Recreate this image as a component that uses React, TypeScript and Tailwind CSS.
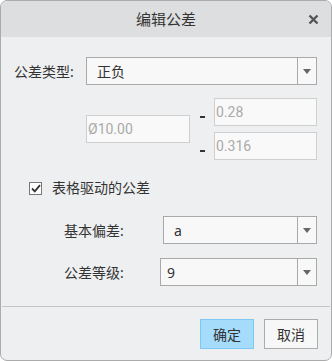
import React from "react";

const font = { fontFamily: '"Noto Sans", "Noto Sans CJK SC", sans-serif' };

function Arrow() {
  return (
    <svg width="8" height="5" viewBox="0 0 8 5">
      <path d="M0 0 L8 0 L4 5 Z" fill="#666" />
    </svg>
  );
}

function Select({ value, w, pl }: { value: string; w: string; pl: string }) {
  return (
    <div className={`flex h-[28px] ${w} border border-[#a9a9a9] bg-[#f8f8f8]`}>
      <div className={`flex flex-1 items-center ${pl} text-[14px] text-[#333]`}>{value}</div>
      <div className="flex w-[19px] items-center justify-center border-l border-[#a9a9a9]">
        <Arrow />
      </div>
    </div>
  );
}

function Input({ value, w }: { value: string; w: string }) {
  return (
    <div
      className={`flex h-[28px] ${w} items-center border border-[#cfcfcf] bg-[#f9f9f9] pl-[1px] text-[14px] text-[#aaaaaa]`}
      style={{ fontFamily: 'Roboto, "Noto Sans", sans-serif' }}
    >
      {value}
    </div>
  );
}

function Dash() {
  return (
    <div className="flex w-[24px] justify-center pt-[9px]">
      <div className="h-[2px] w-[5px] bg-[#333]" />
    </div>
  );
}

export default function App() {
  return (
    <div className="h-[361px] w-[332px] bg-white" style={font}>
      <div className="flex h-[361px] w-[332px] flex-col overflow-hidden rounded-[7px] border border-[#ababab] bg-[#eeeff1]">
        <div className="relative flex h-[36px] shrink-0 items-center justify-center bg-[#dcdedf] text-[15px] text-[#333]">
          编辑公差
          <div className="absolute right-[12px] top-[13px]">
            <svg width="11" height="11" viewBox="0 0 11 11">
              <path d="M1.5 1.5 L9.5 9.5 M9.5 1.5 L1.5 9.5" stroke="#555" strokeWidth="2.4" />
            </svg>
          </div>
        </div>

        <div className="flex flex-col pl-[13px]">
          <div className="mt-[20px] flex items-center">
            <div className="w-[72px] text-[14px] text-[#333]">公差类型:</div>
            <Select value="正负" w="w-[231px]" pl="pl-[10px]" />
          </div>

          <div className="ml-[72px] mt-[13px] flex items-center">
            <Input value="Ø10.00" w="w-[104px]" />
            <div className="flex flex-col gap-[6px]">
              <div className="flex items-center">
                <Dash />
                <Input value="0.28" w="w-[103px]" />
              </div>
              <div className="flex items-center">
                <Dash />
                <Input value="0.316" w="w-[103px]" />
              </div>
            </div>
          </div>

          <div className="ml-[15px] mt-[20px] flex items-center">
            <div className="flex h-[13px] w-[13px] items-center justify-center border border-[#777] bg-white">
              <svg width="10" height="9" viewBox="0 0 10 9">
                <path d="M1 4.5 L3.8 7.3 L9 1.2" stroke="#333" strokeWidth="1.8" fill="none" />
              </svg>
            </div>
            <div className="ml-[10px] text-[14px] leading-[16px] text-[#333]">表格驱动的公差</div>
          </div>

          <div className="ml-[50px] mt-[20px] flex items-center">
            <div className="w-[99px] text-[14px] text-[#333]">基本偏差:</div>
            <Select value="a" w="w-[154px]" pl="pl-[10px]" />
          </div>

          <div className="ml-[50px] mt-[14px] flex items-center">
            <div className="w-[96px] text-[14px] text-[#333]">公差等级:</div>
            <Select value="9" w="w-[157px]" pl="pl-[6px]" />
          </div>
        </div>

        <div className="mx-[1px] mt-[20px] h-px bg-[#c4c4c4]" />

        <div className="mr-[13px] mt-[12px] flex justify-end gap-[10px]">
          <div className="flex h-[30px] w-[54px] items-center justify-center border border-[#7cc8f3] bg-[#a6dcfb] text-[14px] text-[#333]">
            确定
          </div>
          <div className="flex h-[30px] w-[54px] items-center justify-center border border-[#acacac] bg-[#f7f7f7] text-[14px] text-[#333]">
            取消
          </div>
        </div>
      </div>
    </div>
  );
}
